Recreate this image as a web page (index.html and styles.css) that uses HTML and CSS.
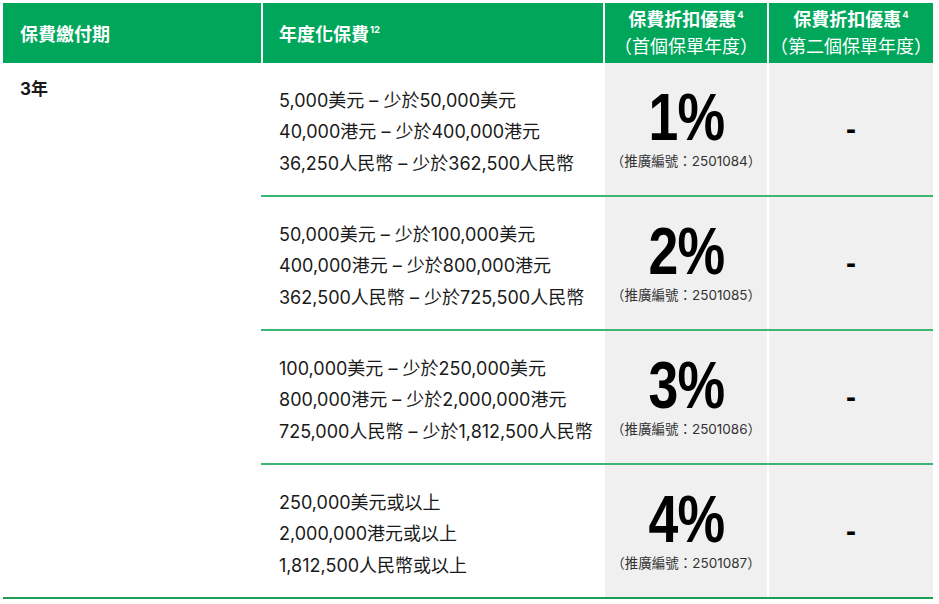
FILE: index.html
```html
<!DOCTYPE html>
<html lang="zh-Hant">
<head>
<meta charset="utf-8">
<title>保費折扣優惠</title>
<link rel="stylesheet" href="styles.css">
</head>
<body>
<table class="rates">
  <colgroup>
    <col class="c1"><col class="c2"><col class="c3"><col class="c4">
  </colgroup>
  <thead>
    <tr>
      <th class="h-left">保費繳付期</th>
      <th class="h-left div">年度化保費<sup>12</sup></th>
      <th class="h-center div"><span class="t1">保費折扣優惠<sup>4</sup></span><span class="t2">（首個保單年度）</span></th>
      <th class="h-center div"><span class="t1">保費折扣優惠<sup>4</sup></span><span class="t2">（第二個保單年度）</span></th>
    </tr>
  </thead>
  <tbody>
    <tr>
      <td class="term" rowspan="4">3年</td>
      <td class="prem div">
        <div>5,000美元 – 少於50,000美元</div>
        <div>40,000港元 – 少於400,000港元</div>
        <div>36,250人民幣 – 少於362,500人民幣</div>
      </td>
      <td class="disc div"><div class="pct"><span>1%</span></div><div class="code">（推廣編號：2501084）</div></td>
      <td class="second div">-</td>
    </tr>
    <tr>
      <td class="prem div">
        <div>50,000美元 – 少於100,000美元</div>
        <div>400,000港元 – 少於800,000港元</div>
        <div>362,500人民幣 – 少於725,500人民幣</div>
      </td>
      <td class="disc div"><div class="pct"><span>2%</span></div><div class="code">（推廣編號：2501085）</div></td>
      <td class="second div">-</td>
    </tr>
    <tr>
      <td class="prem div">
        <div>100,000美元 – 少於250,000美元</div>
        <div>800,000港元 – 少於2,000,000港元</div>
        <div>725,000人民幣 – 少於1,812,500人民幣</div>
      </td>
      <td class="disc div"><div class="pct"><span>3%</span></div><div class="code">（推廣編號：2501086）</div></td>
      <td class="second div">-</td>
    </tr>
    <tr class="last">
      <td class="prem div">
        <div>250,000美元或以上</div>
        <div>2,000,000港元或以上</div>
        <div>1,812,500人民幣或以上</div>
      </td>
      <td class="disc div"><div class="pct"><span>4%</span></div><div class="code">（推廣編號：2501087）</div></td>
      <td class="second div">-</td>
    </tr>
  </tbody>
</table>
</body>
</html>
```
FILE: styles.css
```css
* { box-sizing: border-box; }

body {
  margin: 0;
  padding: 3px;
  background: #fff;
  font-family: "Inter", "Noto Sans CJK TC", sans-serif;
  color: #1a1a1a;
}

.rates {
  width: 930px;
  border-collapse: separate;
  border-spacing: 0;
  table-layout: fixed;
}

.c1 { width: 258px; }
.c2 { width: 342px; }
.c3 { width: 164px; }
.c4 { width: 166px; }

th {
  height: 60px;
  background-color: #00a75b;
  color: #fff;
  font-size: 18px;
  font-weight: 700;
  font-feature-settings: "halt";
  padding: 0 0 0 17px;
  text-align: left;
  vertical-align: middle;
}

th.div {
  background-image: linear-gradient(to right, #fff 2px, transparent 2px);
}

th.h-left.div { padding-left: 18px; }

th.h-center {
  text-align: center;
  padding: 0 0 0 2px;
  line-height: 24px;
}

.t1, .t2 { display: block; }
.t2 { font-weight: 400; }

sup {
  font-size: 9.5px;
  vertical-align: 0;
  position: relative;
  top: -8px;
  margin-left: 1px;
}

td {
  padding: 0;
  vertical-align: middle;
}

tbody tr { height: 134px; }

.term {
  vertical-align: top;
  padding: 12px 0 0 17px;
  font-size: 17px;
  font-weight: 700;
  border-bottom: 2px solid #1f9d58;
}

.prem {
  padding: 6px 0 0 18px;
  font-size: 18px;
  line-height: 31.5px;
  border-bottom: 2px solid #3db574;
}

td.div {
  background-image: linear-gradient(to right, #fff 2px, transparent 2px);
}

.disc, .second {
  background-color: #f0f0f0;
  text-align: center;
  padding-left: 2px;
  border-bottom: 2px solid #3db574;
}

.last td { border-bottom-color: #1f9d58; }

.pct {
  font-family: "Liberation Sans", sans-serif;
  font-weight: 700;
  font-size: 67px;
  line-height: 56px;
  color: #000;
}

.pct span {
  display: inline-block;
  transform: scaleX(0.8);
  letter-spacing: -1px;
}

.code {
  font-size: 13.5px;
  line-height: 18px;
  color: #333;
  margin-top: 7px;
}

.second {
  font-family: "Liberation Sans", sans-serif;
  font-weight: 700;
  font-size: 30px;
  color: #000;
}
```
